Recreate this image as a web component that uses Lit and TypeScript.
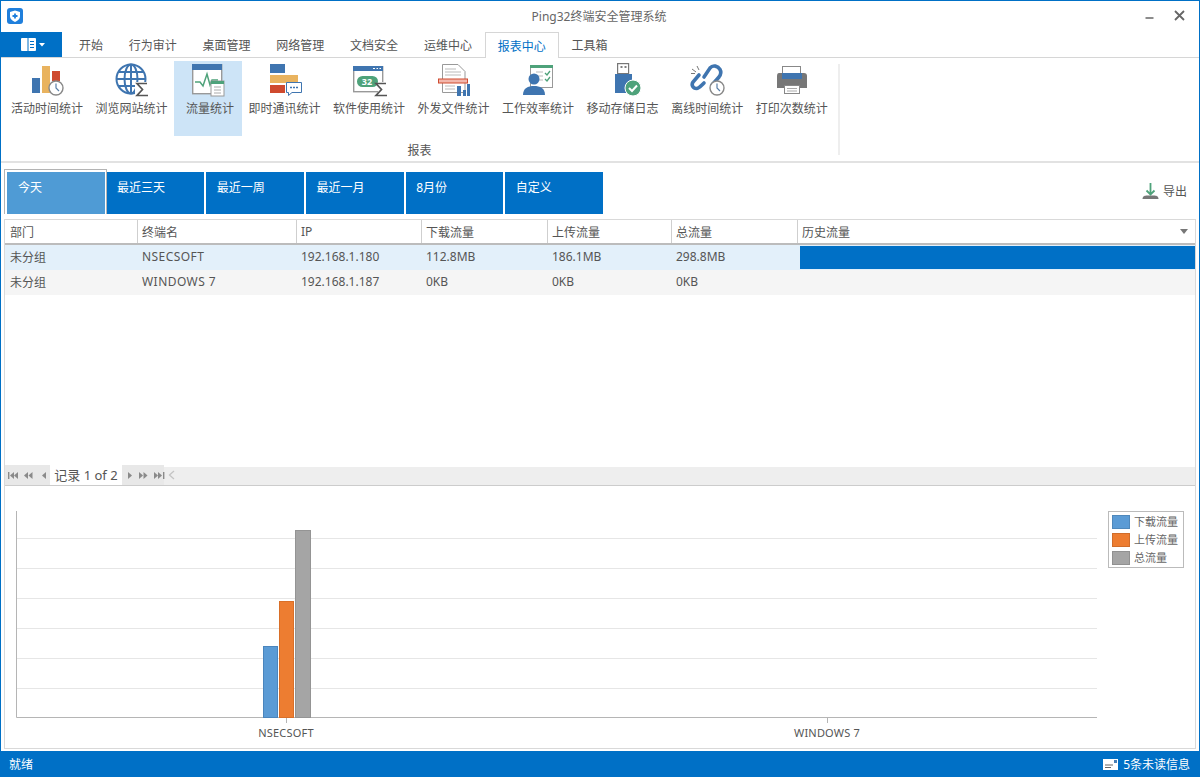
import { LitElement, html, css, svg } from "lit";
import { customElement } from "lit/decorators.js";

const B = "#3f75b0", Y = "#e9b35f", R = "#cf4a2f", G = "#4ea27a", K = "#777";

const sigma = (x = 0, y = 0) => svg`<path transform="translate(${x} ${y})" d="M11 1H1L6.5 7 1 13H12" fill="none" stroke="#555" stroke-width="1.7"/>`;
const clock = (x: number, y: number) => svg`<circle cx=${x} cy=${y} r="7" fill="#fff" stroke="#888" stroke-width="1.4"/><path d="M${x} ${y - 4.5}V${y}L${x + 3} ${y + 3}" fill="none" stroke="#5a7fa8" stroke-width="1.2"/>`;

const ICONS = [
  svg`<rect x="9" y="16" width="8" height="15" fill=${B}/><rect x="19" y="4" width="8" height="27" fill=${Y}/><rect x="29" y="9" width="8" height="10" fill=${R}/>${clock(33, 26)}`,
  svg`<g fill="none" stroke=${B} stroke-width="2"><circle cx="23" cy="17" r="14.5"/><ellipse cx="23" cy="17" rx="6.5" ry="14.5"/><path d="M9 17H37M11 10H35M11 24H35M23 3V31"/></g><rect x="27" y="20" width="14" height="15" fill="#fff"/>${sigma(28, 20.5)}`,
  svg`<rect x="8.7" y="2.7" width="29" height="29" fill="#fff" stroke="#999" stroke-width="1.4"/><rect x="8" y="2" width="30" height="6" fill=${B}/><path d="M11 20H16L19 24 23 12 26 23 28 18H34" fill="none" stroke=${G} stroke-width="1.5"/><rect x="27" y="19" width="13" height="15" fill="#fff" stroke="#999"/><rect x="27" y="19" width="13" height="3" fill=${G}/><path d="M30 25H37M30 28H37M30 31H37" stroke="#aaa"/>`,
  svg`<rect x="9" y="2" width="15" height="9" fill=${B}/><rect x="9" y="13" width="28" height="8" fill=${Y}/><rect x="9" y="23" width="15" height="8" fill=${R}/><path d="M25.5 20.5H40.5V30.5H31L27.5 33.5V30.5H25.5Z" fill="#fff" stroke=${B}/><path d="M29 25.5H31M32 25.5H34M35 25.5H37" stroke=${B} stroke-width="1.6"/>`,
  svg`<rect x="8.7" y="4.7" width="29" height="25" fill="#fff" stroke="#999" stroke-width="1.4"/><rect x="8" y="4" width="30" height="5" fill=${B}/><path d="M28 6.5H30M31.5 6.5H33M34.5 6.5H36" stroke="#fff"/><rect x="12" y="14" width="21" height="11" rx="5.5" fill=${G}/><text x="22" y="23" text-anchor="middle" font-size="9" font-weight="700" fill="#fff">32</text><rect x="33" y="20" width="9" height="14" fill="#fff"/>${sigma(30, 20.5)}`,
  svg`<path d="M12.5 2.5H28L35 9.5V30.5H12.5Z" fill="#fff" stroke="#999"/><path d="M15 7H26M15 10H31M15 13H31M15 24H25M15 27H25" stroke="#bbb"/><rect x="8.5" y="17" width="29" height="4" fill="#f2b7ac" stroke=${R}/><path d="M27 24h4v10h-4zM33 28h3v6h-3zM37 22h3v12h-3z" fill=${B}/>`,
  svg`<rect x="16.5" y="3.5" width="22" height="22" fill="#fff" stroke="#999"/><rect x="16" y="3" width="23" height="3" fill=${G}/><path d="M22 10H29M22 14H29M22 18H29" stroke="#bbb"/><path d="M31 11l2 2 3-4M31 17l2 2 3-4" fill="none" stroke=${G} stroke-width="1.3"/><circle cx="20" cy="17" r="5.5" fill=${B}/><path d="M9 33C9 26 14 24 20 24S31 26 31 33Z" fill=${B}/>`,
  svg`<rect x="18.6" y="1.6" width="11" height="10" fill="#fff" stroke="#777" stroke-width="1.2"/><path d="M21.5 5h2M25.5 5h2" stroke="#555" stroke-width="1.6"/><rect x="16" y="12" width="17" height="19" fill=${B}/><circle cx="34" cy="26" r="8" fill=${G} stroke="#fff"/><path d="M30 26l3 3 5-5.5" fill="none" stroke="#fff" stroke-width="2"/>`,
  svg`<path d="M21 15L27 6C30 2.5 35 4 37 7.5S37.5 13 36 15L29 23M16 13L10 20C8 23 10 26.5 13.5 26.5C16 26.5 18 24 21 21" fill="none" stroke=${B} stroke-width="3.6" stroke-linecap="round"/><path d="M14 4L16 8M9 7L13 10M8 11.5H12" stroke="#777"/>${clock(34, 26)}`,
  svg`<rect x="14.5" y="4.5" width="18" height="8" fill="#fff" stroke="#888"/><path d="M11 11H36Q39 11 39 14V26H9V14Q9 11 11 11Z" fill=${K}/><rect x="14" y="11" width="20" height="6" fill=${B}/><rect x="16.5" y="23.5" width="15" height="8" fill="#fff" stroke="#888"/><path d="M19 26.5H29M19 29H29" stroke="#aaa"/>`,
];

const RIBBON = ["活动时间统计", "浏览网站统计", "流量统计", "即时通讯统计", "软件使用统计", "外发文件统计", "工作效率统计", "移动存储日志", "离线时间统计", "打印次数统计"];
const TABS = ["开始", "行为审计", "桌面管理", "网络管理", "文档安全", "运维中心", "报表中心", "工具箱"];
const FILTERS = ["今天", "最近三天", "最近一周", "最近一月", "8月份", "自定义"];
const COLS: [string, number][] = [["部门", 133], ["终端名", 159], ["IP", 125], ["下载流量", 126], ["上传流量", 124], ["总流量", 126]];
const ROWS = [
  ["未分组", "NSECSOFT", "192.168.1.180", "112.8MB", "186.1MB", "298.8MB"],
  ["未分组", "WINDOWS 7", "192.168.1.187", "0KB", "0KB", "0KB"],
];
const GRID = [538, 568, 598, 628, 658, 688];
const BARS: [number, number, number, string, string][] = [
  [263, 15, 646, "#5b9bd5", "#4a85bd"],
  [279, 15, 601, "#ed7d31", "#d96f28"],
  [295, 16, 530, "#a5a5a5", "#949494"],
];
const LEGEND: [string, string][] = [["下载流量", "leg-blue"], ["上传流量", "leg-orange"], ["总流量", "leg-gray"]];

const tmpl = COLS.map((c) => c[1] + "px").join(" ") + " 1fr";

@customElement("app-root")
export class AppRoot extends LitElement {
  static styles = css`
    :host { display: block; width: 1200px; height: 777px; font: 12px "Noto Sans", "Noto Sans CJK SC", sans-serif; color: #555; overflow: hidden; background: #fff; }
    .win { height: 100%; box-sizing: border-box; border: 1px solid #0070c6; border-bottom: 0; display: flex; flex-direction: column; }
    .title { height: 31px; box-sizing: border-box; flex: none; display: grid; grid-template-columns: 1fr auto 1fr; align-items: center; padding: 0 14px 2px 12px; color: #666; }
    .logo { width: 16px; height: 16px; display: block; margin-left: -6px; }
    .winbtns { justify-self: end; display: flex; align-items: center; gap: 20px; }
    .winbtns svg { display: block; }
    .tabs { height: 26px; flex: none; display: flex; box-sizing: border-box; border-bottom: 1px solid #d6d6d6; }
    .app { width: 61px; height: 25px; box-sizing: border-box; padding-left: 2px; background: #0070c6; display: flex; align-items: center; justify-content: center; gap: 3px; margin-right: 4px; flex: none; }
    .tab { height: 26px; box-sizing: border-box; padding: 0 12.9px; display: flex; align-items: center; color: #555; }
    .tab.on { color: #0070c6; background: #fff; border: 1px solid #d6d6d6; border-bottom: 0; padding: 0 11.9px; }
    .ribbon { height: 105px; flex: none; box-sizing: border-box; border-bottom: 2px solid #e2e2e2; padding: 3px 0 0 4px; display: flex; }
    .group { width: 833px; display: flex; flex-direction: column; align-items: center; }
    .items { display: flex; gap: 0.5px; align-self: flex-start; }
    .item { box-sizing: border-box; height: 75px; padding: 1px 6px 0; display: flex; flex-direction: column; align-items: center; white-space: nowrap; line-height: 17px; color: #555; }
    .item.on { background: #cde4f7; padding: 1px 10px 0; }
    .item.on span { margin: 0 -2px 0 2px; }
    .item svg { display: block; width: 48px; height: 36px; margin-bottom: 2px; }
    .glabel { margin: 7px 4px 0 0; line-height: 16px; }
    .vsep { width: 2px; margin: 3px 0 6px; background: #eee; }
    .panel { flex: 1; margin: 0 3px; display: flex; flex-direction: column; min-height: 0; }
    .filters { height: 56px; flex: none; box-sizing: border-box; padding-top: 6px; display: flex; align-items: flex-start; justify-content: space-between; }
    .flist { display: flex; gap: 2px; align-items: flex-start; }
    .f { width: 97.7px; height: 42px; margin-top: 3px; box-sizing: border-box; padding: 7px 10.4px; background: #0070c6; color: #fff; line-height: 18px; flex: none; }
    .f.on { width: 102.7px; height: 45px; margin: 0 -2px 0 0; padding: 2px 0.7px 0 2px; background: none; border: 1px solid #b4b4b4; border-bottom: 0; position: relative; }
    .f .in { height: 100%; box-sizing: border-box; padding: 7px 11px; background: #4f9bd5; }
    .export { display: flex; align-items: center; gap: 4px; margin: 13px 9px 0 0; }
    .export svg { display: block; }
    .box { flex: 1; margin-bottom: 2px; border: 1px solid #d9d9d9; display: flex; flex-direction: column; min-height: 0; }
    .row { display: grid; height: 25px; align-items: center; }
    .head { border-bottom: 2px solid #bcbcbc; box-sizing: border-box; }
    .hc { height: 100%; box-sizing: border-box; padding-left: 4px; display: flex; align-items: center; border-right: 1px solid #cfcfcf; }
    .hc:first-child { padding-left: 5px; }
    .hc.last { border-right: 0; justify-content: space-between; padding-right: 7px; }
    .caret { width: 0; height: 0; border: 4.5px solid transparent; border-top: 5px solid #777; border-bottom: 0; }
    .c { padding: 0 0 2px 4px; white-space: nowrap; }
    .c:first-child { padding-left: 5px; }
    .c:nth-child(2) { letter-spacing: 0.45px; }
    .r1 { background: #e3f0fa; }
    .r2 { background: #f5f5f5; }
    .meter { height: 23px; margin-left: 2px; background: #0070c6; }
    .spacer { flex: 1; }
    .pager { height: 18px; flex: none; display: flex; align-items: flex-end; background: #eee; border-bottom: 1px solid #ccc; }
    .navs { height: 20px; margin-top: -2px; background: #e8e8e8; display: flex; align-items: center; gap: 5px; padding: 0 4px; align-self: flex-end; flex: none; box-sizing: border-box; }
    .navs.a { width: 45px; padding-left: 3px; }
    .navs.b { width: 42px; padding-left: 5px; }
    .rec { width: 72px; height: 20px; background: #fff; font-size: 13px; line-height: 20px; text-align: center; color: #555; flex: none; }
    .navs svg, .lt { display: block; flex: none; }
    .lt { margin: 0 0 5px 4px; }
    .chart { height: 262px; flex: none; position: relative; }
    .chart > svg { display: block; width: 100%; height: 100%; }
    .chart text { font: 11px "Noto Sans", sans-serif; fill: #555; letter-spacing: 0.2px; }
    .legend { position: absolute; top: 25px; right: 11px; width: 76px; height: 57px; box-sizing: border-box; border: 1px solid #bbb; background: #fff; padding: 3px 0 0 3px; display: flex; flex-direction: column; gap: 4px; font-size: 11px; }
    .lrow { display: flex; align-items: center; gap: 4px; height: 14px; line-height: 14px; white-space: nowrap; color: #666; }
    .sw { width: 18px; height: 14px; box-sizing: border-box; border: 1px solid rgba(0,0,0,.12); }
    .leg-blue { background: #5b9bd5; }
    .leg-orange { background: #ed7d31; }
    .leg-gray { background: #a5a5a5; }
    .status { height: 26px; flex: none; margin: 0 -1px; background: #0070c6; color: #fff; display: flex; align-items: center; justify-content: space-between; padding: 0 10px 0 9px; }
    .msg { display: flex; align-items: center; gap: 5px; }
    .msg svg { display: block; }
    .ml { margin-left: 2px; }
    .mr { margin-right: 1px; }
  `;

  private nav(kind: string) {
    const c = "#8a8a8a";
    const l = (x: number) => svg`<path d="M${x + 4} 1V8L${x} 4.5Z" fill=${c}/>`;
    const r = (x: number) => svg`<path d="M${x} 1V8L${x + 4} 4.5Z" fill=${c}/>`;
    const bar = (x: number) => svg`<rect x=${x} y="1" width="1.4" height="7" fill=${c}/>`;
    if (kind === "first") return html`<svg width="11" height="9">${bar(0)}${l(2)}${l(6)}</svg>`;
    if (kind === "prev2") return html`<svg width="10" height="9">${l(0)}${l(4.5)}</svg>`;
    if (kind === "prev") return html`<svg class="ml" width="6" height="9">${l(1)}</svg>`;
    if (kind === "next") return html`<svg class="mr" width="6" height="9">${r(1)}</svg>`;
    if (kind === "next2") return html`<svg width="10" height="9">${r(0)}${r(4.5)}</svg>`;
    return html`<svg width="11" height="9">${r(0)}${r(4)}${bar(9)}</svg>`;
  }

  render() {
    return html`<div class="win">
      <div class="title">
        <svg class="logo" viewBox="0 0 16 16"><rect width="16" height="16" rx="3" fill="#1f7fdc"/><path d="M8 2.5L13 4V8.5C13 11 10.5 13 8 14C5.5 13 3 11 3 8.5V4Z" fill="#fff"/><path d="M8 5.5V10.5M5.5 8H10.5" stroke="#1f7fdc" stroke-width="1.8"/></svg>
        <span>Ping32终端安全管理系统</span>
        <div class="winbtns">
          <svg width="9" height="10"><path d="M0.5 7H8.5" stroke="#666" stroke-width="1.5"/></svg>
          <svg width="11" height="11"><path d="M1 1L10 10M10 1L1 10" stroke="#666" stroke-width="1.8"/></svg>
        </div>
      </div>
      <div class="tabs">
        <div class="app">
          <svg width="15" height="13"><rect width="15" height="13" rx="1" fill="#fff"/><path d="M7 0V13" stroke="#0070c6"/><path d="M9 3.5H13M9 6.5H13M9 9.5H13" stroke="#0070c6"/><rect x="1.5" y="1.5" width="4" height="10" fill="#fff"/></svg>
          <svg width="6" height="4"><path d="M0 0H6L3 3.5Z" fill="#fff"/></svg>
        </div>
        ${TABS.map((t) => html`<div class="tab ${t === "报表中心" ? "on" : ""}">${t}</div>`)}
      </div>
      <div class="ribbon">
        <div class="group">
          <div class="items">
            ${RIBBON.map((t, i) => html`<div class="item ${i === 2 ? "on" : ""}"><svg viewBox="0 0 48 36">${ICONS[i]}</svg><span>${t}</span></div>`)}
          </div>
          <div class="glabel">报表</div>
        </div>
        <div class="vsep"></div>
      </div>
      <div class="panel">
        <div class="filters">
          <div class="flist">${FILTERS.map((f, i) => i === 0
            ? html`<div class="f on"><div class="in">${f}</div></div>`
            : html`<div class="f">${f}</div>`)}</div>
          <div class="export">
            <svg width="17" height="17" viewBox="0 0 17 17"><path d="M0.5 16C0.5 13 3 12.5 5 12.5H12C14 12.5 16.5 13 16.5 16Z" fill="#777"/><path d="M8.5 0V11M4.5 7.5L8.5 11.5 12.5 7.5" fill="none" stroke="#4ea27a" stroke-width="1.8"/></svg>
            <span>导出</span>
          </div>
        </div>
        <div class="box">
          <div class="row head" style="grid-template-columns:${tmpl}">
            ${COLS.map((c) => html`<div class="hc">${c[0]}</div>`)}
            <div class="hc last"><span>历史流量</span><span class="caret"></span></div>
          </div>
          ${ROWS.map((r, i) => html`<div class="row ${i === 0 ? "r1" : "r2"}" style="grid-template-columns:${tmpl}">
            ${r.map((v) => html`<div class="c">${v}</div>`)}
            <div>${i === 0 ? html`<div class="meter"></div>` : ""}</div>
          </div>`)}
          <div class="spacer"></div>
          <div class="pager">
            <div class="navs a">${this.nav("first")}${this.nav("prev2")}${this.nav("prev")}</div>
            <div class="rec">记录 1 of 2</div>
            <div class="navs b">${this.nav("next")}${this.nav("next2")}${this.nav("last")}</div>
            <svg class="lt" width="7" height="10"><path d="M6 1L1.5 5 6 9" fill="none" stroke="#c4c4c4" stroke-width="1.3"/></svg>
          </div>
          <div class="chart">
            <svg viewBox="5 486 1190 262">
              ${GRID.map((y) => svg`<path d="M17 ${y}.5H1097" stroke="#e6e6e6"/>`)}
              <path d="M16.5 511V717.5H1097" fill="none" stroke="#b5b5b5"/>
              <path d="M286.5 717V723M827.5 717V723" stroke="#b5b5b5"/>
              ${BARS.map(([x, w, y, f, s]) => svg`<rect x=${x + 0.5} y=${y + 0.5} width=${w - 1} height=${717 - y} fill=${f} stroke=${s}/>`)}
              <text x="286" y="737" text-anchor="middle">NSECSOFT</text>
              <text x="827" y="737" text-anchor="middle">WINDOWS 7</text>
            </svg>
            <div class="legend">
              ${LEGEND.map(([t, c]) => html`<div class="lrow"><span class="sw ${c}"></span><span>${t}</span></div>`)}
            </div>
          </div>
        </div>
      </div>
      <div class="status">
        <span>就绪</span>
        <div class="msg">
          <svg width="15" height="11"><rect width="15" height="11" fill="#fff"/><rect x="11" y="1" width="3" height="3" fill="#4a7fb5"/><path d="M2 6H10M2 8.5H8" stroke="#666" stroke-width="1.2"/></svg>
          <span>5条未读信息</span>
        </div>
      </div>
    </div>`;
  }
}
